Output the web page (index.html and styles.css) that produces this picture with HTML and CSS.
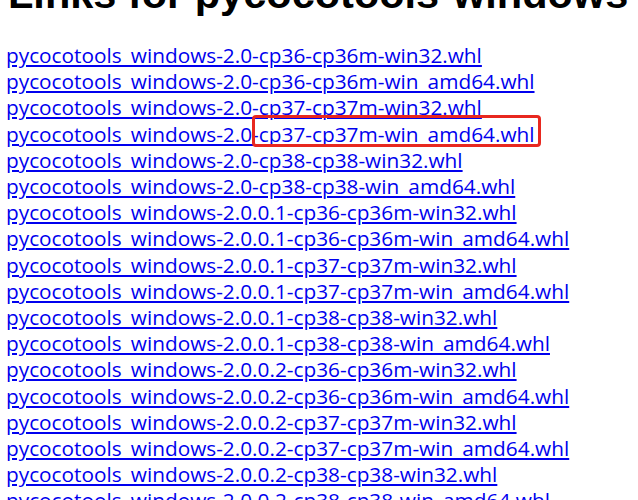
FILE: index.html
```html
<!DOCTYPE html>
<html>
<head>
<meta charset="utf-8">
<link rel="stylesheet" href="styles.css">
</head>
<body>
<div class="page">
<h1 class="title">Links for pycocotools-windows</h1>
<div class="links">
<a href="#">pycocotools_windows-2.0-cp36-cp36m-win32.whl</a><br>
<a href="#">pycocotools_windows-2.0-cp36-cp36m-win_amd64.whl</a><br>
<a href="#">pycocotools_windows-2.0-cp37-cp37m-win32.whl</a><br>
<span class="row"><a href="#">pycocotools_windows-2.0-cp37-cp37m-win_amd64.whl</a><span class="mark"></span></span><br>
<a href="#">pycocotools_windows-2.0-cp38-cp38-win32.whl</a><br>
<a href="#">pycocotools_windows-2.0-cp38-cp38-win_amd64.whl</a><br>
<a href="#">pycocotools_windows-2.0.0.1-cp36-cp36m-win32.whl</a><br>
<a href="#">pycocotools_windows-2.0.0.1-cp36-cp36m-win_amd64.whl</a><br>
<a href="#">pycocotools_windows-2.0.0.1-cp37-cp37m-win32.whl</a><br>
<a href="#">pycocotools_windows-2.0.0.1-cp37-cp37m-win_amd64.whl</a><br>
<a href="#">pycocotools_windows-2.0.0.1-cp38-cp38-win32.whl</a><br>
<a href="#">pycocotools_windows-2.0.0.1-cp38-cp38-win_amd64.whl</a><br>
<a href="#">pycocotools_windows-2.0.0.2-cp36-cp36m-win32.whl</a><br>
<a href="#">pycocotools_windows-2.0.0.2-cp36-cp36m-win_amd64.whl</a><br>
<a href="#">pycocotools_windows-2.0.0.2-cp37-cp37m-win32.whl</a><br>
<a href="#">pycocotools_windows-2.0.0.2-cp37-cp37m-win_amd64.whl</a><br>
<a href="#">pycocotools_windows-2.0.0.2-cp38-cp38-win32.whl</a><br>
<a href="#">pycocotools_windows-2.0.0.2-cp38-cp38-win_amd64.whl</a><br>
</div>
</div>
</body>
</html>
```
FILE: styles.css
```css
html, body {
  margin: 0;
  padding: 0;
  background: #fff;
  overflow: hidden;
}
.page {
  margin-top: -28px;
  padding-left: 6px;
  font-family: "Open Sans", sans-serif;
}
.title {
  margin: 0 0 26px 2px;
  font-family: "Liberation Sans", Arial, sans-serif;
  font-weight: bold;
  font-size: 41.5px;
  line-height: 44px;
  color: #000;
}
.links {
  font-size: 20.8px;
  line-height: 26.2px;
}
.links a {
  color: #0000ee;
  text-decoration: underline;
}
.row {
  position: relative;
}
.mark {
  position: absolute;
  left: 246px;
  top: -5px;
  width: 283px;
  height: 26px;
  border: 3px solid #e8281f;
  border-radius: 4px;
}
```
